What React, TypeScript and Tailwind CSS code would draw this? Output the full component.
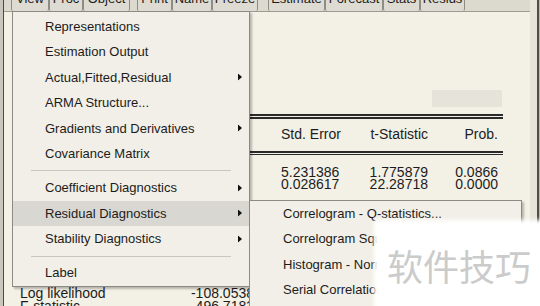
const toolbar = [
  { label: "View", w: 38 },
  { label: "Proc", w: 34 },
  { label: "Object", w: 47 },
  { gap: 7 },
  { label: "Print", w: 35 },
  { label: "Name", w: 40 },
  { label: "Freeze", w: 46 },
  { gap: 10 },
  { label: "Estimate", w: 57 },
  { label: "Forecast", w: 58 },
  { label: "Stats", w: 37 },
  { label: "Resids", w: 45 },
];

type Item = { label?: string; sub?: boolean; sep?: boolean; active?: boolean };

const menuItems: Item[] = [
  { label: "Representations" },
  { label: "Estimation Output" },
  { label: "Actual,Fitted,Residual", sub: true },
  { label: "ARMA Structure..." },
  { label: "Gradients and Derivatives", sub: true },
  { label: "Covariance Matrix" },
  { sep: true },
  { label: "Coefficient Diagnostics", sub: true },
  { label: "Residual Diagnostics", sub: true, active: true },
  { label: "Stability Diagnostics", sub: true },
  { sep: true },
  { label: "Label" },
];

const subItems = [
  "Correlogram - Q-statistics...",
  "Correlogram Squared Residuals...",
  "Histogram - Normality Test",
  "Serial Correlation LM Test...",
];

function Arrow() {
  return (
    <svg width="4" height="7" viewBox="0 0 4 7" className="absolute right-[7px] top-1/2 -translate-y-1/2">
      <path d="M0 0 L4 3.5 L0 7 Z" fill="#111" />
    </svg>
  );
}

export default function App() {
  return (
    <div
      className="relative w-[540px] h-[306px] overflow-hidden bg-[#f3f0e6] flex text-[#1c1c1c]"
      style={{ fontFamily: '"Liberation Sans", Arial, sans-serif' }}
    >
      {/* window left border */}
      <div className="w-[3px] shrink-0 bg-[#c9c6bd]" />
      <div className="w-[1px] shrink-0 bg-[#4a4a48]" />

      <div className="flex-1 flex flex-col">
        {/* toolbar */}
        <div className="h-[12px] bg-[#dcd9cf] border-b border-[#9e9b93] flex pl-[7px]">
          {toolbar.map((b, i) =>
            "gap" in b ? (
              <div key={i} style={{ width: b.gap }} />
            ) : (
              <div
                key={i}
                className="h-[11px] overflow-hidden border-x border-[#8f8c85] rounded-b-[2px] bg-[#dedbd2] flex justify-center text-[13px] leading-[14px]"
                style={{ width: b.w }}
              >
                <span className="mt-[-8px]">{b.label}</span>
              </div>
            )
          )}
        </div>

        {/* output body */}
        <div className="pl-[16px] w-[499px] text-[14px]">
          <div className="ml-auto mr-[1px] mt-[78px] w-[70px] h-[17px] bg-[#e6e3db]" />
          <div className="mt-[7px] h-[5px] border-t-2 border-b-2 border-[#2a2a2a]" />
          <div className="flex pt-[8px] h-[32px] leading-[14px] whitespace-nowrap">
            <div className="w-[261px]" />
            <div className="w-[58px] text-right">Std. Error</div>
            <div className="w-[89px] text-right">t-Statistic</div>
            <div className="w-[70px] text-right">Prob.</div>
          </div>
          <div className="h-[4px] border-t-2 border-b border-[#2a2a2a]" />
          <div className="flex pt-[11px] leading-[12px] whitespace-nowrap">
            <div className="w-[261px]" />
            <div className="w-[58px] text-right">
              <div>5.231386</div>
              <div>0.028617</div>
            </div>
            <div className="w-[89px] text-right">
              <div>1.775879</div>
              <div>22.28718</div>
            </div>
            <div className="w-[70px] text-right">
              <div>0.0866</div>
              <div>0.0000</div>
            </div>
          </div>
          <div className="mt-[97px] leading-[13px] w-[234px]">
            <div className="flex justify-between">
              <span>Log likelihood</span>
              <span>-108.0538</span>
            </div>
            <div className="flex justify-between">
              <span>F-statistic</span>
              <span>496.7183</span>
            </div>
          </div>
        </div>
      </div>

      {/* window right edge */}
      <div className="w-[7px] shrink-0 bg-[#e7e4da]" />
      <div className="w-[2px] shrink-0 bg-[#4d4d4b]" />
      <div className="w-[1px] shrink-0 bg-[#bdbab2]" />

      {/* View menu */}
      <div className="absolute left-[12px] top-[11px] w-[238px] h-[276px] bg-[#f1efe7] border border-[#8c8a84] shadow-[2px_2px_2px_rgba(0,0,0,0.25)] py-[2px] text-[13px]">
        {menuItems.map((it, i) =>
          it.sep ? (
            <div key={i} className="h-[9px] flex items-center px-[18px]">
              <div className="h-px w-full bg-[#c9c6be]" />
            </div>
          ) : (
            <div
              key={i}
              className={`relative h-[25.4px] flex items-center pl-[32px] ${it.active ? "bg-[#d9d7d1]" : ""}`}
            >
              {it.label}
              {it.sub && <Arrow />}
            </div>
          )
        )}
      </div>

      {/* Residual Diagnostics submenu */}
      <div className="absolute left-[249px] top-[200px] w-[273px] h-[120px] bg-[#f1efe7] border border-[#8c8a84] shadow-[2px_2px_2px_rgba(0,0,0,0.25)] text-[13px]">
        {subItems.map((s, i) => (
          <div key={i} className="h-[25.4px] flex items-center pl-[33px] whitespace-nowrap">
            {s}
          </div>
        ))}
      </div>

      {/* watermark */}
      <div
        className="absolute left-[378px] top-[224px] w-[162px] h-[82px] bg-white flex items-center justify-center shadow-[0_0_4px_4px_#ffffff]"
        style={{ fontFamily: '"Noto Sans CJK SC", sans-serif' }}
      >
        <span className="text-[36px] leading-none text-[#cbcbcb]">软件技巧</span>
      </div>
    </div>
  );
}
